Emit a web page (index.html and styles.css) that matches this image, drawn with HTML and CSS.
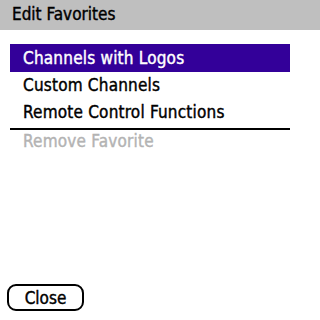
FILE: index.html
```html
<!DOCTYPE html>
<html>
<head>
<meta charset="utf-8">
<link rel="stylesheet" href="styles.css">
</head>
<body>
<div class="screen">
  <div class="titlebar">Edit Favorites</div>
  <ul class="menu">
    <li class="item selected">Channels with Logos</li>
    <li class="item">Custom Channels</li>
    <li class="item item-end">Remote Control Functions</li>
    <li class="divider"></li>
    <li class="item disabled">Remove Favorite</li>
  </ul>
  <div class="footer">
    <button class="btn">Close</button>
  </div>
</div>
</body>
</html>
```
FILE: styles.css
```css
html, body {
  margin: 0;
  padding: 0;
  background: #ffffff;
}
.screen {
  width: 320px;
  height: 320px;
  display: flex;
  flex-direction: column;
  font-family: "DejaVu Sans Condensed", "DejaVu Sans", sans-serif;
  font-size: 17px;
  color: #000000;
  -webkit-text-stroke: 0.4px currentColor;
  overflow: hidden;
}
.titlebar {
  height: 30px;
  line-height: 29px;
  background: #bfbfbf;
  padding-left: 12px;
  box-sizing: border-box;
}
.menu {
  list-style: none;
  margin: 14px 30px 0 10px;
  padding: 0;
}
.item {
  height: 27px;
  line-height: 27px;
  padding-left: 13px;
  letter-spacing: 0.2px;
}
.selected {
  height: 28px;
  line-height: 28px;
  background: #330099;
  color: #ffffff;
}
.item-end {
  padding-bottom: 2px;
}
.divider {
  height: 2px;
  background: #000000;
}
.disabled {
  color: #b3b3b3;
  height: 23px;
  line-height: 23px;
}
.footer {
  margin-top: auto;
  padding: 0 0 9px 7px;
}
.btn {
  font: inherit;
  color: #000000;
  background: #ffffff;
  border: 2px solid #000000;
  border-radius: 9px;
  width: 77px;
  height: 27px;
  padding: 0;
  line-height: 22px;
}
```
